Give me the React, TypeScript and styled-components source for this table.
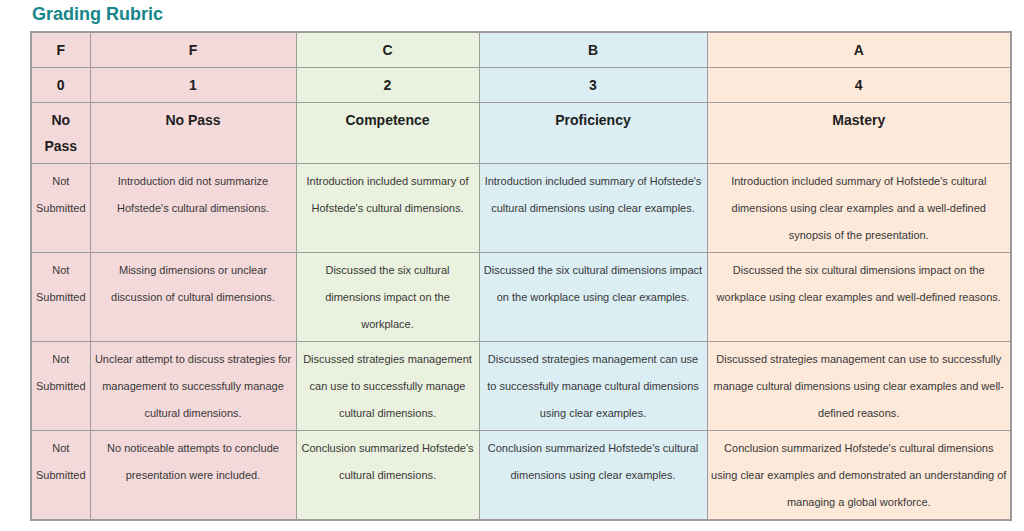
import React from 'react'
import styled, { createGlobalStyle } from 'styled-components'

const GlobalStyle = createGlobalStyle`
  body {
    margin: 0;
    background: #ffffff;
    font-family: "Liberation Sans", Arial, sans-serif;
  }
`

const Page = styled.div`
  padding: 3px 14px 0 30px;
`

const Title = styled.h2`
  margin: 0 0 5px 2px;
  font-size: 18px;
  line-height: 23px;
  font-weight: bold;
  color: #17868a;
`

const Table = styled.table`
  width: 980px;
  table-layout: fixed;
  border-collapse: collapse;
  border: 2px solid #a09a98;
`

type Tone = 'pink' | 'green' | 'blue' | 'peach'

const tones: Record<Tone, string> = {
  pink: '#f4d9da',
  green: '#eaf1de',
  blue: '#dbeef4',
  peach: '#fde9da',
}

const HeadCell = styled.th<{ $tone: Tone }>`
  background: ${(p) => tones[p.$tone]};
  border: 1px solid #9c9c9c;
  padding: 4px 4px;
  font-size: 14px;
  line-height: 26px;
  font-weight: bold;
  color: #1e1e1e;
  text-align: center;
  vertical-align: top;
`

const Cell = styled.td<{ $tone: Tone }>`
  background: ${(p) => tones[p.$tone]};
  border: 1px solid #9c9c9c;
  padding: 4px 3px 3px;
  font-size: 11px;
  line-height: 27px;
  color: #383838;
  text-align: center;
  vertical-align: top;
`

const columnTones: Tone[] = ['pink', 'pink', 'green', 'blue', 'peach']
const widths = [59, 206, 183, 228, 304]

const headRows = [
  ['F', 'F', 'C', 'B', 'A'],
  ['0', '1', '2', '3', '4'],
  ['No Pass', 'No Pass', 'Competence', 'Proficiency', 'Mastery'],
]

const bodyRows = [
  [
    'Not Submitted',
    "Introduction did not summarize Hofstede's cultural dimensions.",
    "Introduction included summary of Hofstede's cultural dimensions.",
    "Introduction included summary of Hofstede's cultural dimensions using clear examples.",
    "Introduction included summary of Hofstede's cultural dimensions using clear examples and a well-defined synopsis of the presentation.",
  ],
  [
    'Not Submitted',
    'Missing dimensions or unclear discussion of cultural dimensions.',
    'Discussed the six cultural dimensions impact on the workplace.',
    'Discussed the six cultural dimensions impact on the workplace using clear examples.',
    'Discussed the six cultural dimensions impact on the workplace using clear examples and well-defined reasons.',
  ],
  [
    'Not Submitted',
    'Unclear attempt to discuss strategies for management to successfully manage cultural dimensions.',
    'Discussed strategies management can use to successfully manage cultural dimensions.',
    'Discussed strategies management can use to successfully manage cultural dimensions using clear examples.',
    'Discussed strategies management can use to successfully manage cultural dimensions using clear examples and well-defined reasons.',
  ],
  [
    'Not Submitted',
    'No noticeable attempts to conclude presentation were included.',
    "Conclusion summarized Hofstede's cultural dimensions.",
    "Conclusion summarized Hofstede's cultural dimensions using clear examples.",
    "Conclusion summarized Hofstede's cultural dimensions using clear examples and demonstrated an understanding of managing a global workforce.",
  ],
]

export default function App() {
  return (
    <>
      <GlobalStyle />
      <Page>
        <Title>Grading Rubric</Title>
        <Table>
          <colgroup>
            {widths.map((w, i) => (
              <col key={i} style={{ width: w }} />
            ))}
          </colgroup>
          <thead>
            {headRows.map((row, r) => (
              <tr key={r}>
                {row.map((text, c) => (
                  <HeadCell key={c} $tone={columnTones[c]}>
                    {text}
                  </HeadCell>
                ))}
              </tr>
            ))}
          </thead>
          <tbody>
            {bodyRows.map((row, r) => (
              <tr key={r}>
                {row.map((text, c) => (
                  <Cell key={c} $tone={columnTones[c]}>
                    {text}
                  </Cell>
                ))}
              </tr>
            ))}
          </tbody>
        </Table>
      </Page>
    </>
  )
}
